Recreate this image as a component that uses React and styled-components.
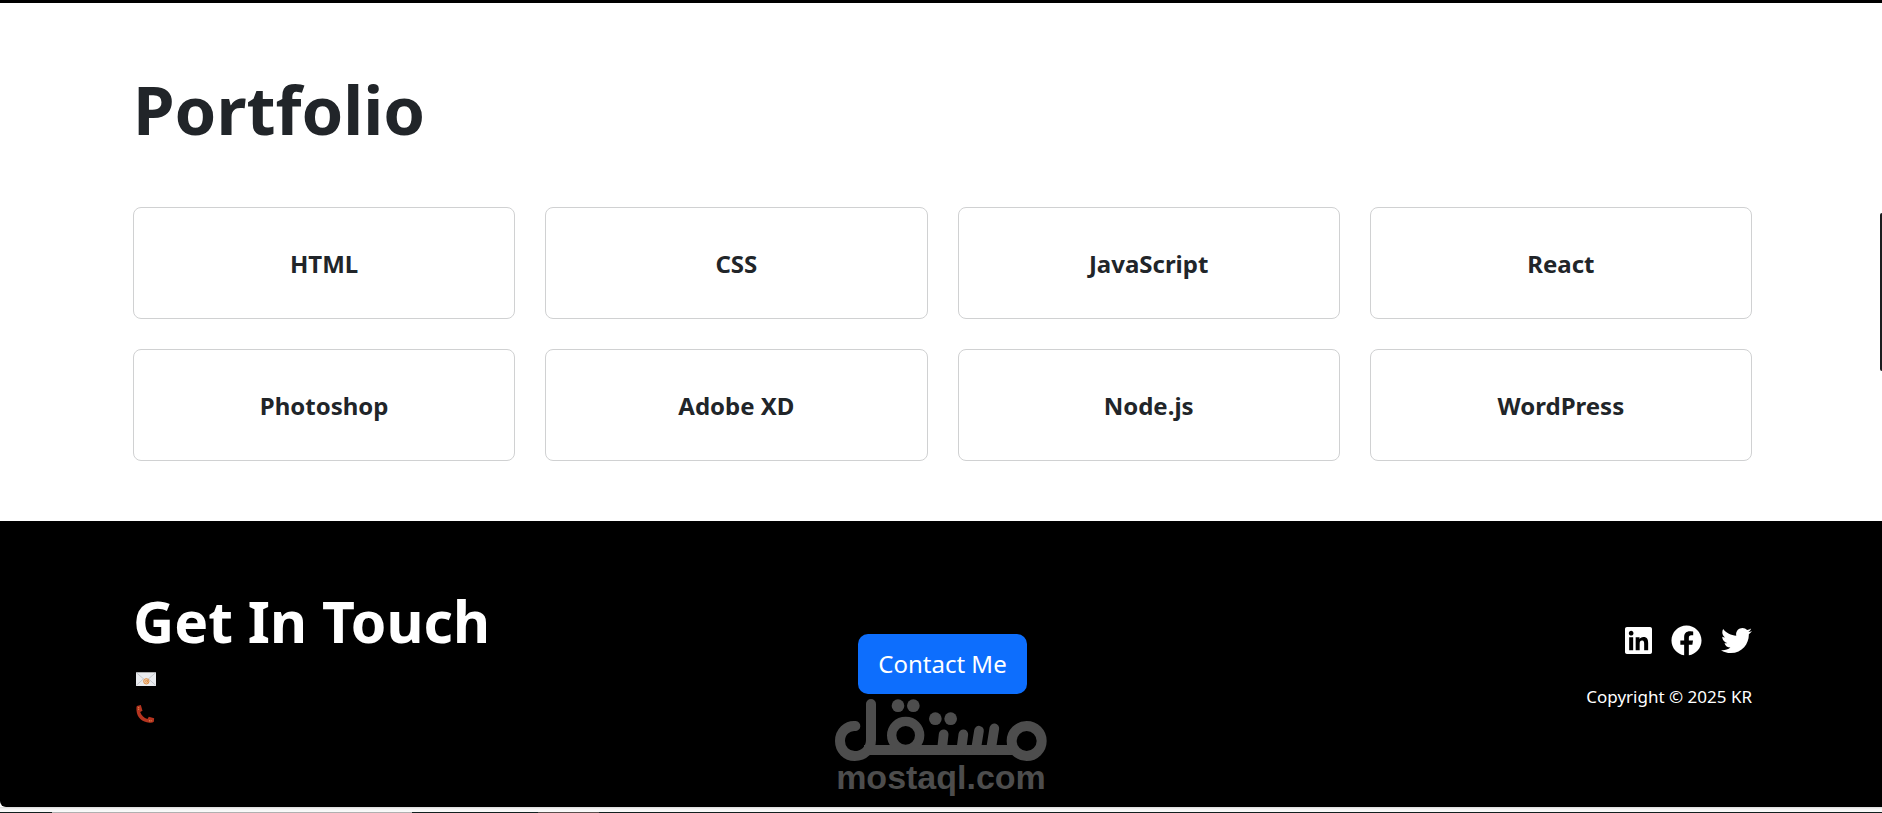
import React from "react";
import styled, { createGlobalStyle } from "styled-components";
import { FaLinkedin, FaFacebook, FaTwitter } from "react-icons/fa";

const GlobalStyle = createGlobalStyle`
  *, *::before, *::after { box-sizing: border-box; }
  body {
    margin: 0;
    background: #fff;
    color: #212529;
    font-family: "Segoe UI", "Noto Sans", "Open Sans", sans-serif;
    overflow-x: hidden;
  }
`;

const Page = styled.div`
  position: relative;
  border-top: 3px solid #000;
`;

const Section = styled.section`
  padding: 64px 130px 60px 133px;
`;

const Title = styled.h1`
  margin: 0 0 56px;
  font-size: 67px;
  line-height: 84px;
  font-weight: 700;
`;

const Grid = styled.ul`
  list-style: none;
  margin: 0;
  padding: 0;
  display: grid;
  grid-template-columns: repeat(4, 1fr);
  gap: 30px;
`;

const Card = styled.li`
  display: flex;
  align-items: center;
  justify-content: center;
  height: 112px;
  padding-top: 2px;
  border: 1px solid #d0d1d2;
  border-radius: 8px;
`;

const CardTitle = styled.h2`
  margin: 0;
  font-size: 24px;
  line-height: 30px;
  font-weight: 700;
`;

const FooterBar = styled.footer`
  position: relative;
  display: grid;
  grid-template-columns: 1fr auto 1fr;
  align-items: center;
  padding: 64px 130px 64px 133px;
  background: #000;
  color: #fff;
  border-bottom-left-radius: 6px;
`;

const Touch = styled.div`
  display: flex;
  flex-direction: column;
  align-items: flex-start;
  padding-bottom: 12px;
`;

const TouchTitle = styled.h2`
  margin: 0 0 4px;
  font-size: 57px;
  line-height: 72px;
  font-weight: 700;
  white-space: nowrap;
`;

const TouchLink = styled.a`
  display: flex;
  align-items: center;
  height: 35px;
  padding-left: 3px;
`;

const ContactButton = styled.button`
  height: 60px;
  padding: 0 20px;
  border: 0;
  border-radius: 10px;
  background: #0d6efd;
  color: #fff;
  font-family: inherit;
  font-size: 24px;
  line-height: 36px;
  cursor: pointer;
`;

const Side = styled.div`
  display: flex;
  flex-direction: column;
  align-items: flex-end;
  gap: 28px;
  padding-top: 6px;
`;

const Socials = styled.nav`
  display: flex;
  align-items: center;
  gap: 19px;
`;

const SocialLink = styled.a`
  display: flex;
  color: #fff;
  svg {
    width: ${(p) => p.$width}px;
    height: 31px;
  }
`;

const Copyright = styled.p`
  margin: 0;
  font-size: 17px;
  line-height: 26px;
  white-space: nowrap;
`;

const Watermark = styled.div`
  position: absolute;
  left: 50%;
  bottom: 14px;
  transform: translateX(-50%);
  display: flex;
  flex-direction: column;
  align-items: center;
  color: #4d4d4d;
  font-family: "Liberation Sans", Arial, sans-serif;
  font-size: 34px;
  line-height: 32px;
  font-weight: 700;
  pointer-events: none;
`;

const Shelf = styled.div`
  height: 5px;
  background: linear-gradient(#d8d8d8, #f4f4f4 40%, #fafafa);
`;

const Taskbar = styled.div`
  display: flex;
  height: 1px;
  background: #12201f;
`;

const TaskbarPart = styled.span`
  width: ${(p) => p.$width}px;
  background: ${(p) => p.$color};
`;

const ScrollThumb = styled.div`
  position: absolute;
  top: 210px;
  right: 0;
  width: 2px;
  height: 158px;
  background: #1a1c1e;
  border-radius: 2px 0 0 2px;
`;

const skills = ["HTML", "CSS", "JavaScript", "React", "Photoshop", "Adobe XD", "Node.js", "WordPress"];

const MailIcon = () => (
  <svg width="20" height="14" viewBox="0 0 60 42" aria-hidden="true">
    <rect width="60" height="42" fill="#e9ebee" />
    <path d="M1 2 L30 27 L59 2 M1 40 L22 21 M59 40 L38 21" fill="none" stroke="#b3b7bd" strokeWidth="2" />
    <path d="M0 1 H60" stroke="#777" strokeWidth="2" />
    <circle cx="31" cy="28" r="8" fill="#f3d9bd" stroke="#e08a3c" strokeWidth="3" />
    <path d="M28 28a3 3 0 1 0 6 0a3 3 0 1 0-6 0M34 24v6q2 3 4 0" fill="none" stroke="#dd7f2a" strokeWidth="2" />
  </svg>
);

const PhoneIcon = () => (
  <svg width="19" height="18" viewBox="0 0 56 54" aria-hidden="true">
    <path
      d="M2 3 L14 0 L19 17 L12 21 C15 31 23 39 34 42 L38 35 L54 40 L53 50 Q49 54 40 53 C18 52 2 38 1 16 Q0 7 2 3Z"
      fill="#b5341f"
    />
    <path d="M6 8h3M6 13h3M40 46v3M45 46v3" stroke="#e39a52" strokeWidth="3" />
  </svg>
);

const BrandMark = () => (
  <svg width="212" height="62" viewBox="45 237 636 186" fill="none" stroke="currentColor" strokeWidth="30" strokeLinecap="round" aria-hidden="true">
    <path d="M106 318 C81 316 60 336 60 363 C60 390 80 408 104 408 C132 408 153 388 153 360 V252" />
    <path d="M132 390 H590" strokeLinecap="butt" />
    <circle cx="257" cy="346" r="42" strokeWidth="28" />
    <circle cx="620" cy="363" r="45" />
    <path d="M371 343 L366 388 M430 343 L424 388 M477 332 L468 388 M523 325 L513 388" strokeWidth="29" />
    <g fill="currentColor" stroke="none">
      <circle cx="234" cy="257" r="19" />
      <circle cx="280" cy="257" r="19" />
      <circle cx="346" cy="296" r="19" />
      <circle cx="392" cy="296" r="19" />
    </g>
  </svg>
);

export default function App() {
  return (
    <>
      <GlobalStyle />
      <Page>
        <Section>
          <Title>Portfolio</Title>
          <Grid>
            {skills.map((skill) => (
              <Card key={skill}>
                <CardTitle>{skill}</CardTitle>
              </Card>
            ))}
          </Grid>
        </Section>
        <FooterBar>
          <Touch>
            <TouchTitle>Get In Touch</TouchTitle>
            <TouchLink href="#email" aria-label="Email"><MailIcon /></TouchLink>
            <TouchLink href="#phone" aria-label="Phone"><PhoneIcon /></TouchLink>
          </Touch>
          <ContactButton type="button">Contact Me</ContactButton>
          <Side>
            <Socials aria-label="Social">
              <SocialLink $width={27} href="#linkedin" aria-label="LinkedIn"><FaLinkedin /></SocialLink>
              <SocialLink $width={31} href="#facebook" aria-label="Facebook"><FaFacebook /></SocialLink>
              <SocialLink $width={31} href="#twitter" aria-label="Twitter"><FaTwitter /></SocialLink>
            </Socials>
            <Copyright>Copyright © 2025 KR</Copyright>
          </Side>
          <Watermark>
            <BrandMark />
            <span>mostaql.com</span>
          </Watermark>
        </FooterBar>
        <Shelf />
        <Taskbar>
          <TaskbarPart $width={52} $color="#12201f" />
          <TaskbarPart $width={360} $color="#b0b0b0" />
          <TaskbarPart $width={126} $color="#12201f" />
          <TaskbarPart $width={61} $color="#5a4e4c" />
        </Taskbar>
        <ScrollThumb />
      </Page>
    </>
  );
}
